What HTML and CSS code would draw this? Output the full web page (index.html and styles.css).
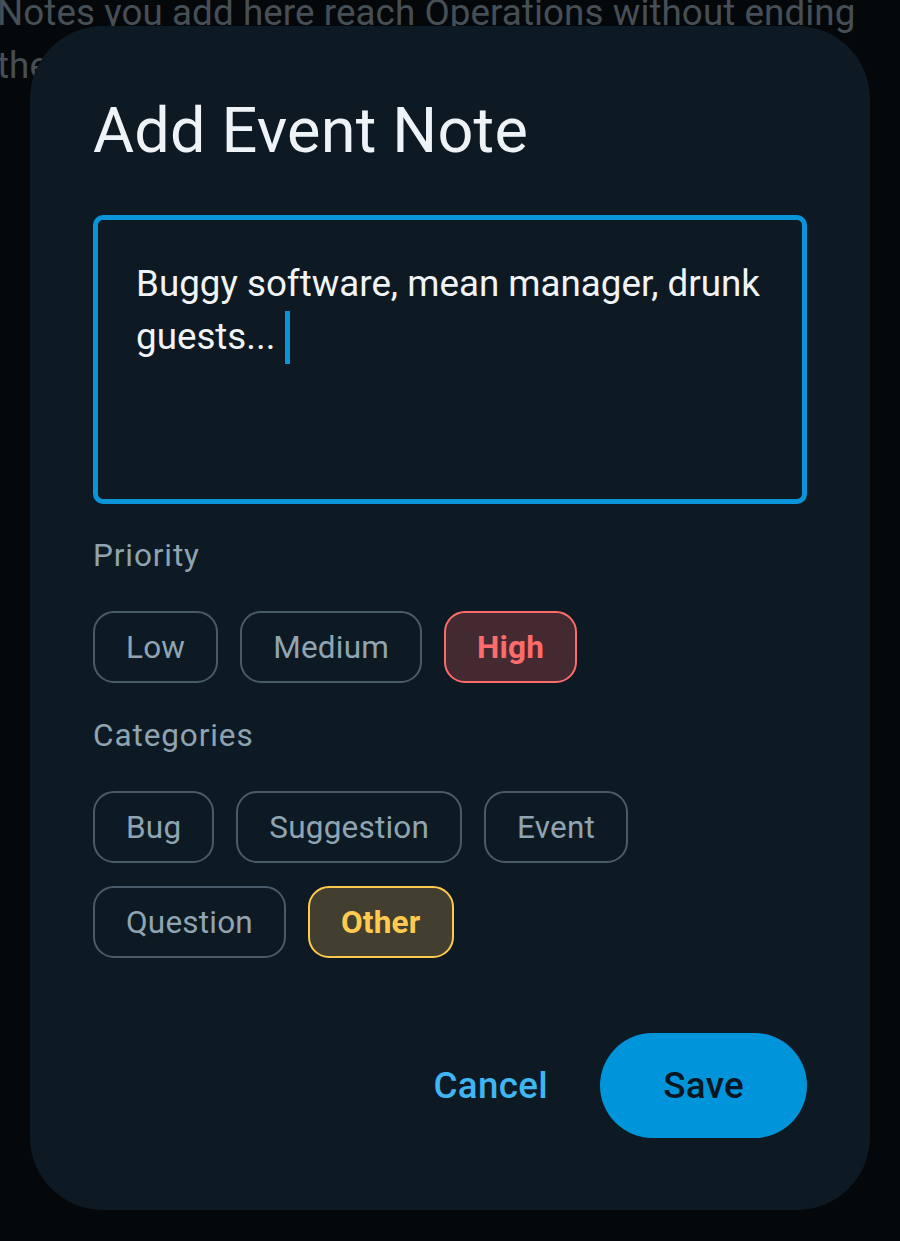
FILE: index.html
```html
<!DOCTYPE html>
<html lang="en">
<head>
<meta charset="utf-8">
<title>Add Event Note</title>
<link rel="stylesheet" href="styles.css">
</head>
<body>
<div class="backdrop">
  <p class="bg-text">Notes you add here reach Operations without ending the event.</p>
</div>
<div class="dialog" role="dialog" aria-labelledby="dlg-title">
  <h1 class="title" id="dlg-title">Add Event Note</h1>
  <div class="field">
    <div class="field-text">Buggy software, mean manager, drunk<br>guests...<span class="cursor"></span></div>
  </div>
  <div class="label">Priority</div>
  <div class="chips">
    <span class="chip">Low</span>
    <span class="chip">Medium</span>
    <span class="chip chip-high">High</span>
  </div>
  <div class="label">Categories</div>
  <div class="chips">
    <span class="chip">Bug</span>
    <span class="chip">Suggestion</span>
    <span class="chip">Event</span>
    <span class="chip">Question</span>
    <span class="chip chip-other">Other</span>
  </div>
  <div class="actions">
    <button class="btn btn-text">Cancel</button>
    <button class="btn btn-filled">Save</button>
  </div>
</div>
</body>
</html>
```

FILE: styles.css
```css
html, body {
  margin: 0;
  padding: 0;
}

body {
  width: 900px;
  height: 1241px;
  background: #04080b;
  font-family: Roboto, "Noto Sans", "Liberation Sans", sans-serif;
  position: relative;
  overflow: hidden;
}

.backdrop {
  padding: 0;
}

.bg-text {
  margin: -13px 0 0 -3px;
  width: 880px;
  font-size: 36.75px;
  line-height: 52.5px;
  letter-spacing: 0.08px;
  color: #474f56;
}

.dialog {
  position: absolute;
  left: 30px;
  top: 26px;
  width: 840px;
  box-sizing: border-box;
  padding: 63px 63px 72px;
  background: #0e1a23;
  border-radius: 73px;
}

.title {
  margin: 0;
  font-size: 63px;
  line-height: 84px;
  font-weight: 400;
  letter-spacing: 0.2px;
  color: #eef3f8;
}

.field {
  margin-top: 42px;
  height: 289px;
  box-sizing: border-box;
  border: 5px solid #0a95da;
  border-radius: 10px;
  padding: 38px 20px 34px 38px;
}

.field-text {
  font-size: 36.75px;
  line-height: 52.5px;
  color: #f1f4f7;
}

.cursor {
  display: inline-block;
  width: 5px;
  height: 53px;
  margin-left: 10px;
  background: #0a95da;
  vertical-align: -15px;
}

.label {
  margin-top: 31px;
  font-size: 31.5px;
  line-height: 42px;
  letter-spacing: 0.9px;
  color: #8fa3b0;
}

.chips + .label {
  margin-top: 32px;
}

.chips {
  margin-top: 34px;
  display: flex;
  flex-wrap: wrap;
  column-gap: 22px;
  row-gap: 23px;
}

.chip {
  display: flex;
  align-items: center;
  box-sizing: border-box;
  height: 72px;
  padding: 0 31px;
  border: 2.6px solid #4a5b68;
  border-radius: 21px;
  font-size: 31.5px;
  letter-spacing: 0.2px;
  color: #90a4b1;
}

.chip-high {
  border-color: #ff6b6b;
  background: #432a31;
  color: #ff6b6b;
  font-weight: 700;
}

.chip-other {
  border-color: #ffc94d;
  background: #433f30;
  color: #ffca4f;
  font-weight: 700;
}

.actions {
  margin-top: 75px;
  display: flex;
  justify-content: flex-end;
  gap: 21px;
}

.btn {
  height: 105px;
  border: 0;
  font-family: inherit;
  font-size: 36.75px;
  font-weight: 500;
  letter-spacing: 0.3px;
  background: transparent;
  cursor: pointer;
}

.btn-text {
  padding: 0 31.5px;
  color: #3fb5f3;
}

.btn-filled {
  padding: 0 63px;
  border-radius: 53px;
  background: #0095da;
  color: #071621;
}
```
